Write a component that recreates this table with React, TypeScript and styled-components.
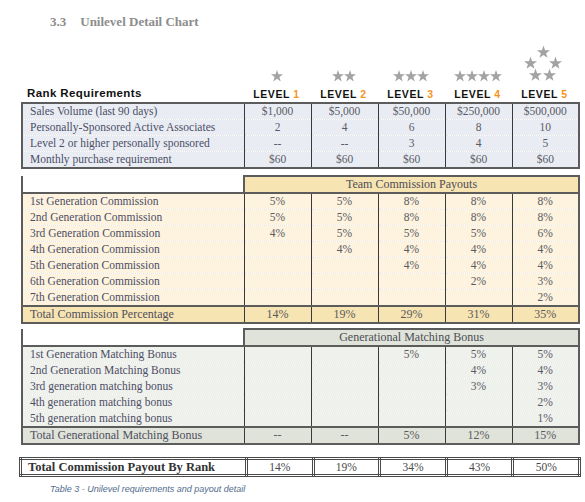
import styled, { createGlobalStyle } from "styled-components";

const GlobalStyle = createGlobalStyle`
  body {
    margin: 0;
    background: #ffffff;
    font-family: "Liberation Serif", serif;
  }
`;

type Row = [string, string, string, string, string, string];

const rankRows: Row[] = [
  ["Sales Volume (last 90 days)", "$1,000", "$5,000", "$50,000", "$250,000", "$500,000"],
  ["Personally-Sponsored Active Associates", "2", "4", "6", "8", "10"],
  ["Level 2 or higher personally sponsored", "--", "--", "3", "4", "5"],
  ["Monthly purchase requirement", "$60", "$60", "$60", "$60", "$60"],
];

const teamRows: Row[] = [
  ["1st Generation Commission", "5%", "5%", "8%", "8%", "8%"],
  ["2nd Generation Commission", "5%", "5%", "8%", "8%", "8%"],
  ["3rd Generation Commission", "4%", "5%", "5%", "5%", "6%"],
  ["4th Generation Commission", "", "4%", "4%", "4%", "4%"],
  ["5th Generation Commission", "", "", "4%", "4%", "4%"],
  ["6th Generation Commission", "", "", "", "2%", "3%"],
  ["7th Generation Commission", "", "", "", "", "2%"],
];
const teamTotal: Row = ["Total Commission Percentage", "14%", "19%", "29%", "31%", "35%"];

const matchRows: Row[] = [
  ["1st Generation Matching Bonus", "", "", "5%", "5%", "5%"],
  ["2nd Generation Matching Bonus", "", "", "", "4%", "4%"],
  ["3rd generation matching bonus", "", "", "", "3%", "3%"],
  ["4th generation matching bonus", "", "", "", "", "2%"],
  ["5th generation matching bonus", "", "", "", "", "1%"],
];
const matchTotal: Row = ["Total Generational Matching Bonus", "--", "--", "5%", "12%", "15%"];

const payout: Row = ["Total Commission Payout By Rank", "14%", "19%", "34%", "43%", "50%"];

const STAR = "5,0 6.2,3.6 10,3.6 7,5.9 8.1,9.5 5,7.3 1.9,9.5 3,5.9 0,3.6 3.8,3.6";

const StarRow = ({ count }: { count: number }) => (
  <svg width={count * 12} height={12} viewBox={`0 0 ${count * 10} 10`}>
    {Array.from({ length: count }).map((_, i) => (
      <polygon key={i} points={STAR} transform={`translate(${i * 10} 0)`} fill="#a3a3a3" />
    ))}
  </svg>
);

// five stars set in a ring for the top rank
const StarCluster = () => {
  const spots = [
    [14, 1.5],
    [1, 12.5],
    [26, 12.5],
    [6, 24.5],
    [20, 24.5],
  ];
  return (
    <svg width={44} height={38} viewBox="0 0 44 38">
      {spots.map(([x, y], i) => (
        <polygon key={i} points={STAR} transform={`translate(${x} ${y}) scale(1.3)`} fill="#a3a3a3" />
      ))}
    </svg>
  );
};

export default function App() {
  return (
    <Page>
      <GlobalStyle />
      <Title>
        <span>3.3</span>
        <span>Unilevel Detail Chart</span>
      </Title>

      <HeaderGrid>
        <RankTitle>Rank Requirements</RankTitle>
        {[1, 2, 3, 4, 5].map((n) => (
          <LevelHead key={n}>
            {n === 5 ? <StarCluster /> : <StarRow count={n} />}
            <LevelLabel>
              LEVEL <em>{n}</em>
            </LevelLabel>
          </LevelHead>
        ))}
      </HeaderGrid>

      <Table $body="#e9edf3" $head="#e9edf3">
        <Cols />
        <tbody>
          {rankRows.map((r) => (
            <tr key={r[0]}>
              {r.map((c, i) => (
                <td key={i}>{c}</td>
              ))}
            </tr>
          ))}
        </tbody>
      </Table>

      <Table $body="#fdf3de" $head="#f7e4b3" $gap={6}>
        <Cols />
        <thead>
          <tr>
            <BlankHead />
            <th colSpan={5}>Team Commission Payouts</th>
          </tr>
        </thead>
        <tbody>
          {teamRows.map((r) => (
            <tr key={r[0]}>
              {r.map((c, i) => (
                <td key={i}>{c}</td>
              ))}
            </tr>
          ))}
        </tbody>
        <tfoot>
          <tr>
            {teamTotal.map((c, i) => (
              <td key={i}>{c}</td>
            ))}
          </tr>
        </tfoot>
      </Table>

      <Table $body="#eff1ec" $head="#dfe3da" $gap={4}>
        <Cols />
        <thead>
          <tr>
            <BlankHead />
            <th colSpan={5}>Generational Matching Bonus</th>
          </tr>
        </thead>
        <tbody>
          {matchRows.map((r) => (
            <tr key={r[0]}>
              {r.map((c, i) => (
                <td key={i}>{c}</td>
              ))}
            </tr>
          ))}
        </tbody>
        <tfoot>
          <tr>
            {matchTotal.map((c, i) => (
              <td key={i}>{c}</td>
            ))}
          </tr>
        </tfoot>
      </Table>

      <PayoutTable>
        <colgroup>
          <col style={{ width: 226 }} />
          {[1, 2, 3, 4, 5].map((n) => (
            <col key={n} style={{ width: 66.6 }} />
          ))}
        </colgroup>
        <tbody>
          <tr>
            {payout.map((c, i) => (
              <td key={i}>{c}</td>
            ))}
          </tr>
        </tbody>
      </PayoutTable>

      <Caption>Table 3 - Unilevel requirements and payout detail</Caption>
    </Page>
  );
}

const Cols = () => (
  <colgroup>
    <col style={{ width: 222 }} />
    {[1, 2, 3, 4, 5].map((n) => (
      <col key={n} style={{ width: 67 }} />
    ))}
  </colgroup>
);

const Page = styled.div`
  width: 585px;
  padding-top: 14px;
`;

const Title = styled.h2`
  margin: 0 0 0 50px;
  display: flex;
  gap: 14px;
  font-family: "Liberation Serif", serif;
  font-size: 13px;
  font-weight: bold;
  line-height: 16px;
  color: #8d8d8d;
`;

const HeaderGrid = styled.div`
  display: grid;
  grid-template-columns: 222px repeat(5, 67px);
  align-items: end;
  margin: 14px 0 0 21px;
  padding-bottom: 2px;
`;

const RankTitle = styled.div`
  padding-left: 6px;
  font-family: "Liberation Sans", Arial, sans-serif;
  font-weight: bold;
  font-size: 11.5px;
  letter-spacing: 0.4px;
  line-height: 13px;
  color: #111;
`;

const LevelHead = styled.div`
  display: flex;
  flex-direction: column;
  align-items: center;
  gap: 6px;
`;

const LevelLabel = styled.div`
  font-family: "Liberation Sans", Arial, sans-serif;
  font-weight: 900;
  font-size: 10.5px;
  letter-spacing: 0.6px;
  line-height: 12px;
  color: #111;

  em {
    font-style: normal;
    color: #f7941d;
  }
`;

const Table = styled.table<{ $body: string; $head: string; $gap?: number }>`
  margin: ${(p) => p.$gap ?? 0}px 0 0 21px;
  border-collapse: collapse;
  table-layout: fixed;
  width: 557px;
  font-family: "Liberation Serif", serif;
  font-size: 11.5px;
  color: #5a5a66;

  td,
  th {
    height: 15px;
    padding: 0;
    line-height: 15px;
    white-space: nowrap;
    overflow: hidden;
  }

  th {
    background: ${(p) => p.$head};
    border: 2px solid #5c5c5c;
    border-bottom: 1px dotted #8a8a8a;
    font-weight: normal;
    font-size: 12px;
    color: #4d4d55;
    height: 14px;
  }

  td {
    background: ${(p) => p.$body};
    text-align: center;
    border-left: 1px solid #3a3a3a;
    border-right: 1px solid #3a3a3a;
    border-bottom: 1px dotted rgba(0, 0, 0, 0.1);
  }

  td:first-child {
    text-align: left;
    padding-left: 7px;
    color: #4c4d66;
    border-left: 2px solid #5c5c5c;
  }

  td:last-child {
    border-right: 2px solid #5c5c5c;
  }

  tbody tr:first-child td {
    border-top: 2px solid #5c5c5c;
  }

  tbody tr:last-child td {
    border-bottom: 2px solid #5c5c5c;
  }

  tfoot td {
    background: ${(p) => p.$head};
    border-top: 1px solid #444;
    border-bottom: 2px solid #5c5c5c;
    font-size: 12px;
    color: #5a5a5a;
    height: 15px;
  }

  tfoot td:first-child {
    color: #4f4f5c;
  }
`;

const BlankHead = styled.td`
  && {
    background: transparent;
    border: none;
  }
`;

const PayoutTable = styled.table`
  margin: 12px 0 0 19px;
  border-collapse: collapse;
  table-layout: fixed;
  width: 559px;
  font-family: "Liberation Serif", serif;

  td {
    height: 14px;
    padding: 0;
    border: 3px double #4a4a4a;
    text-align: center;
    font-size: 11.5px;
    line-height: 14px;
    color: #4a4a4a;
  }

  td:first-child {
    text-align: left;
    padding-left: 6px;
    font-weight: bold;
    font-size: 12.5px;
    color: #333;
  }
`;

const Caption = styled.div`
  margin: 6px 0 0 50px;
  font-family: "Liberation Sans", Arial, sans-serif;
  font-style: italic;
  font-size: 9px;
  line-height: 12px;
  color: #4f6b8c;
`;
